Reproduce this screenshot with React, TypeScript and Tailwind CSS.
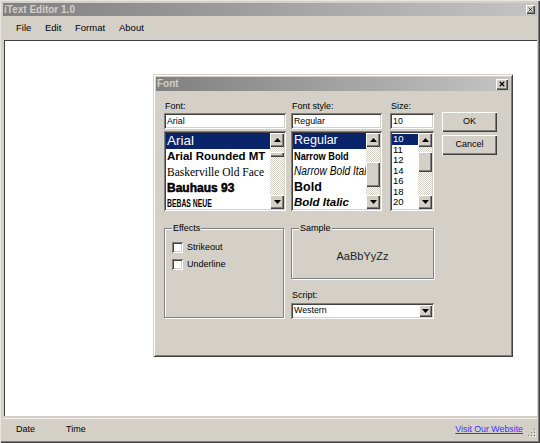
import React from "react";

const raised =
  "bg-[#d4d0c8] shadow-[inset_1px_1px_0_#fff,inset_-1px_-1px_0_#404040,inset_-2px_-2px_0_#808080]";
const sunken =
  "bg-white shadow-[inset_1px_1px_0_#808080,inset_-1px_-1px_0_#fff,inset_2px_2px_0_#404040,inset_-2px_-2px_0_#d4d0c8]";
const checker =
  "bg-[repeating-conic-gradient(#d4d0c8_0%_25%,#ffffff_0%_50%)] bg-[length:2px_2px]";

const Up = () => (
  <svg width="7" height="4" viewBox="0 0 7 4">
    <path d="M3.5 0L7 4H0z" fill="#000" />
  </svg>
);
const Down = () => (
  <svg width="7" height="4" viewBox="0 0 7 4">
    <path d="M0 0H7L3.5 4z" fill="#000" />
  </svg>
);

function ScrollBar({ spacer, thumb }: { spacer: string; thumb: string }) {
  return (
    <div className="w-[14px] shrink-0 flex flex-col">
      <div className={`${raised} h-[14px] flex items-center justify-center`}>
        <Up />
      </div>
      <div className={`${checker} flex-1 flex flex-col`}>
        <div className={spacer} />
        <div className={`${raised} ${thumb}`} />
      </div>
      <div className={`${raised} h-[14px] flex items-center justify-center`}>
        <Down />
      </div>
    </div>
  );
}

function CloseX({ size, stroke }: { size: number; stroke: number }) {
  return (
    <svg width={size} height={size} viewBox="0 0 8 8">
      <path d="M1 1L7 7M7 1L1 7" stroke="#000" strokeWidth={stroke} />
    </svg>
  );
}

function GroupBox({
  label,
  className,
  children,
}: {
  label: string;
  className: string;
  children?: React.ReactNode;
}) {
  return (
    <div
      className={`relative border border-[#808080] shadow-[1px_1px_0_#fff,inset_1px_1px_0_#fff] ${className}`}
    >
      <span className="absolute -top-[7px] left-[7px] px-[1px] bg-[#d4d0c8] text-[9px] leading-[12px]">
        {label}
      </span>
      {children}
    </div>
  );
}

function Check({ label }: { label: string }) {
  return (
    <div className="flex items-center h-[11px]">
      <div className={`${sunken} w-[11px] h-[11px]`} />
      <span className="ml-[4px] text-[9px] leading-[11px]">{label}</span>
    </div>
  );
}

export default function App() {
  return (
    <div className="relative w-[540px] h-[443px] bg-[#d4d0c8] p-[3px] flex flex-col font-[family-name:Liberation_Sans,Arial,sans-serif] text-black shadow-[inset_1px_1px_0_#e8e6e0,inset_-1px_-1px_0_#404040,inset_-2px_-2px_0_#808080]">
      {/* main title bar */}
      <div className="h-[13px] shrink-0 flex items-center justify-between pl-[1px] pr-[2px] bg-gradient-to-r from-[#808080] to-[#c4c4c4]">
        <span className="text-[10px] font-bold leading-[13px] text-[#d4d0c8]">
          iText Editor 1.0
        </span>
        <div className={`${raised} w-[9px] h-[9px] flex items-center justify-center`}>
          <CloseX size={5} stroke={1} />
        </div>
      </div>

      {/* menu bar */}
      <div className="h-[24px] shrink-0 flex items-center pl-[13px] text-[9.5px]">
        <span className="w-[29px]">File</span>
        <span className="w-[30px]">Edit</span>
        <span className="w-[44px]">Format</span>
        <span>About</span>
      </div>

      {/* edit area */}
      <div className="flex-1 ml-[1px] bg-white shadow-[inset_1px_1px_0_#404040,inset_-1px_-1px_0_#fff]" />

      {/* status bar */}
      <div className="h-[22px] shrink-0 mt-[2px] border-t border-[#f4f3f0] flex items-center pl-[13px] text-[9px]">
        <span className="w-[50px]">Date</span>
        <span>Time</span>
        <span className="ml-auto text-[#3333ff] underline text-[8.8px]">Visit Our Website</span>
        <svg width="11" height="11" viewBox="0 0 11 11" className="ml-[3px] self-end mb-[1px]">
          <g fill="#fff">
            <rect x="9" y="2" width="1" height="1" />
            <rect x="6" y="5" width="1" height="1" />
            <rect x="9" y="5" width="1" height="1" />
            <rect x="3" y="8" width="1" height="1" />
            <rect x="6" y="8" width="1" height="1" />
            <rect x="9" y="8" width="1" height="1" />
          </g>
          <g fill="#808080">
            <rect x="8" y="1" width="1" height="1" />
            <rect x="5" y="4" width="1" height="1" />
            <rect x="8" y="4" width="1" height="1" />
            <rect x="2" y="7" width="1" height="1" />
            <rect x="5" y="7" width="1" height="1" />
            <rect x="8" y="7" width="1" height="1" />
          </g>
        </svg>
      </div>

      {/* Font dialog */}
      <div className="absolute left-[153px] top-[74px] w-[360px] h-[283px] bg-[#d4d0c8] p-[3px] flex flex-col shadow-[inset_1px_1px_0_#d4d0c8,inset_-1px_-1px_0_#404040,inset_2px_2px_0_#fff,inset_-2px_-2px_0_#808080]">
        <div className="h-[14px] shrink-0 flex items-center justify-between pl-[1px] pr-[2px] bg-gradient-to-r from-[#808080] to-[#c4c4c4]">
          <span className="text-[10px] font-bold leading-[14px] text-[#d4d0c8]">Font</span>
          <div className={`${raised} w-[12px] h-[11px] flex items-center justify-center`}>
            <CloseX size={6} stroke={1.6} />
          </div>
        </div>

        <div className="pl-[8px] pt-[9px] flex flex-col text-[9px]">
          {/* row 1 */}
          <div className="flex">
            {/* Font column */}
            <div className="w-[122px] flex flex-col">
              <div className="h-[13px] leading-[12px] pl-[1px]">Font:</div>
              <div className={`${sunken} h-[16px] pl-[3px] leading-[16px] text-[8.8px]`}>Arial</div>
              <div className={`${sunken} mt-[2px] h-[80px] p-[2px] flex`}>
                <div className="flex-1 overflow-hidden">
                  <div className="h-[15.5px] bg-[#0a246a] text-white text-[13.5px] leading-[15px] pl-[1px]">
                    Arial
                  </div>
                  <div className="h-[15.5px] text-[11.5px] font-bold leading-[15.5px] pl-[1px] whitespace-nowrap">
                    Arial Rounded MT
                  </div>
                  <div className="h-[15.5px] text-[11.5px] leading-[16px] pl-[1px] whitespace-nowrap font-[family-name:Liberation_Serif,serif]">
                    Baskerville Old Face
                  </div>
                  <div className="h-[16px] text-[12px] font-bold leading-[16px] pl-[1px] whitespace-nowrap [-webkit-text-stroke:0.5px_#000]">
                    Bauhaus 93
                  </div>
                  <div className="h-[15.5px] leading-[15.5px] pl-[1px] whitespace-nowrap">
                    <span className="inline-block origin-left scale-x-[0.62] text-[11px] font-bold">
                      BEBAS NEUE
                    </span>
                  </div>
                </div>
                <ScrollBar spacer="h-[5px]" thumb="h-[5px]" />
              </div>
            </div>

            {/* Font style column */}
            <div className="w-[91px] ml-[5px] flex flex-col">
              <div className="h-[13px] leading-[12px] pl-[1px]">Font style:</div>
              <div className={`${sunken} h-[16px] pl-[3px] leading-[16px] text-[8.8px]`}>Regular</div>
              <div className={`${sunken} mt-[2px] h-[80px] p-[2px] flex`}>
                <div className="flex-1 overflow-hidden">
                  <div className="h-[15.5px] bg-[#0a246a] text-white text-[12.5px] leading-[15px] pl-[1px]">
                    Regular
                  </div>
                  <div className="h-[15.5px] leading-[15.5px] pl-[1px] whitespace-nowrap">
                    <span className="inline-block origin-left scale-x-[0.8] text-[11.5px] font-bold">
                      Narrow Bold
                    </span>
                  </div>
                  <div className="h-[15.5px] leading-[15.5px] pl-[1px] whitespace-nowrap">
                    <span className="inline-block origin-left scale-x-[0.85] text-[12px] italic font-medium">
                      Narrow Bold Italic
                    </span>
                  </div>
                  <div className="h-[15.5px] text-[12.5px] font-bold leading-[15.5px] pl-[1px]">Bold</div>
                  <div className="h-[15px] text-[11.5px] font-bold italic leading-[15px] pl-[1px] whitespace-nowrap">
                    Bold Italic
                  </div>
                </div>
                <ScrollBar spacer="h-[15px]" thumb="h-[25px]" />
              </div>
            </div>

            {/* Size column */}
            <div className="w-[44px] ml-[8px] flex flex-col">
              <div className="h-[13px] leading-[12px] pl-[1px]">Size:</div>
              <div className={`${sunken} h-[16px] pl-[3px] leading-[16px] text-[8.8px]`}>10</div>
              <div className={`${sunken} mt-[2px] h-[80px] p-[2px] flex`}>
                <div className="flex-1 overflow-hidden text-[9.5px] leading-[10.5px] pt-[1px]">
                  <div className="h-[10.5px] bg-[#0a246a] text-white pl-[1px]">10</div>
                  <div className="h-[10.5px] pl-[1px]">11</div>
                  <div className="h-[10.5px] pl-[1px]">12</div>
                  <div className="h-[10.5px] pl-[1px]">14</div>
                  <div className="h-[10.5px] pl-[1px]">16</div>
                  <div className="h-[10.5px] pl-[1px]">18</div>
                  <div className="h-[10.5px] pl-[1px]">20</div>
                </div>
                <ScrollBar spacer="h-[5px]" thumb="h-[20px]" />
              </div>
            </div>

            {/* Buttons */}
            <div className="w-[55px] ml-[8px] mt-[12px] flex flex-col gap-[3px]">
              <div className={`${raised} h-[20px] flex items-center justify-center`}>OK</div>
              <div className={`${raised} h-[20px] flex items-center justify-center`}>Cancel</div>
            </div>
          </div>

          {/* row 2 */}
          <div className="flex mt-[17px]">
            <GroupBox label="Effects" className="w-[120px] h-[90px]">
              <div className="pl-[7px] pt-[13px] flex flex-col gap-[6px]">
                <Check label="Strikeout" />
                <Check label="Underline" />
              </div>
            </GroupBox>

            <div className="ml-[7px] w-[143px] flex flex-col">
              <GroupBox label="Sample" className="h-[51px] flex items-center justify-center">
                <span className="text-[11px] text-[#222] mt-[6px]">AaBbYyZz</span>
              </GroupBox>
              <div className="mt-[10px] h-[12px] leading-[12px] pl-[1px]">Script:</div>
              <div className={`${sunken} mt-[2px] h-[16px] flex items-center pl-[3px] pr-[2px]`}>
                <span className="flex-1 text-[8.8px]">Western</span>
                <div className={`${raised} w-[13px] h-[12px] flex items-center justify-center`}>
                  <Down />
                </div>
              </div>
            </div>
          </div>
        </div>
      </div>
    </div>
  );
}
